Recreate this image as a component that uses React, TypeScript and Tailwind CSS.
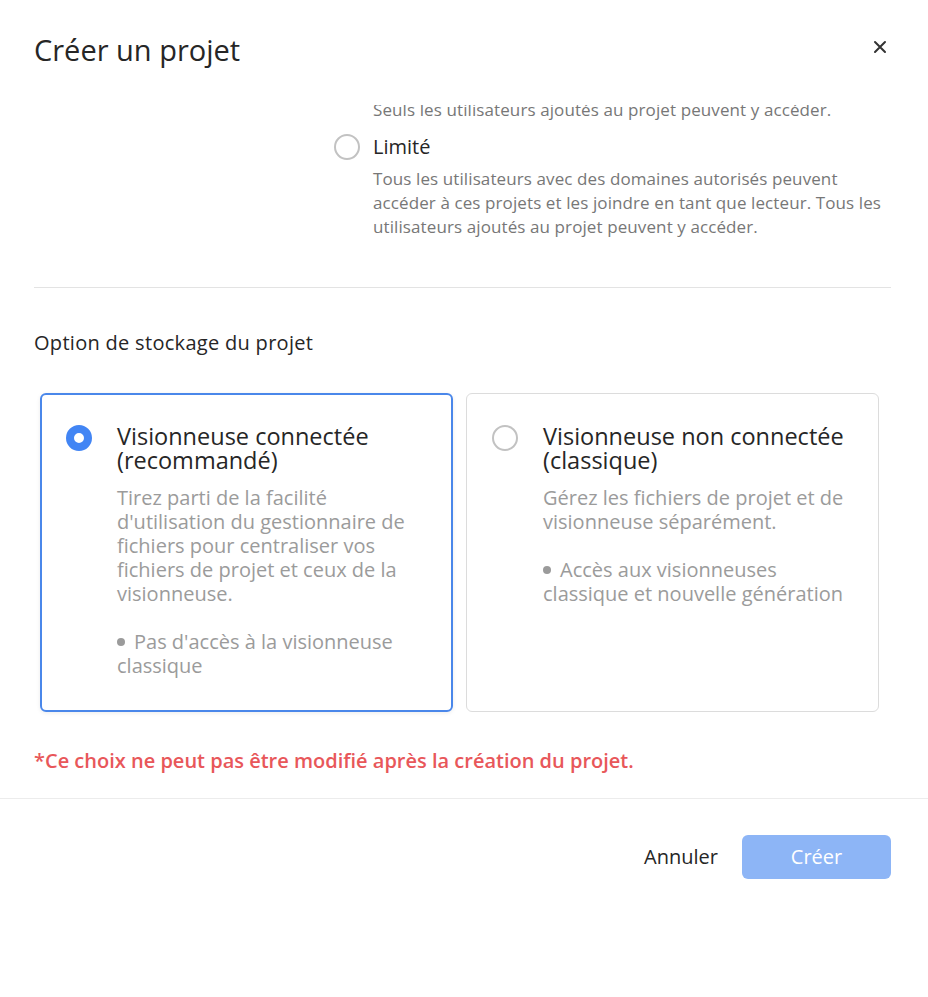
import React, { useState } from 'react';

type Storage = 'connected' | 'classic';

const Radio = ({ checked }: { checked: boolean }) =>
  checked ? (
    <span className="block w-[26px] h-[26px] shrink-0 rounded-full border-[8px] border-[#4285f4] bg-white" />
  ) : (
    <span className="block w-[26px] h-[26px] shrink-0 rounded-full border-[2.5px] border-[#c2c2c2] bg-white" />
  );

interface OptionCardProps {
  title: string[];
  description: string;
  bullet: string;
  selected: boolean;
  onSelect: () => void;
}

const OptionCard: React.FC<OptionCardProps> = ({ title, description, bullet, selected, onSelect }) => (
  <button
    onClick={onSelect}
    className={`text-left rounded-[6px] flex items-start gap-[25px] ${
      selected
        ? 'border-2 border-[#4a87ea] pt-[29px] pl-[24px] pr-[24px] shadow-[0_1px_4px_rgba(0,0,0,0.08)]'
        : 'border border-[#dcdcdc] pt-[30px] pl-[25px] pr-[25px]'
    }`}
  >
    <span className="mt-px">
      <Radio checked={selected} />
    </span>
    <span className="flex flex-col">
      <span className="text-[23.5px] leading-6 font-medium text-[#262626]">
        {title.map((t) => (
          <span key={t} className="block">{t}</span>
        ))}
      </span>
      <span className="mt-[14px] text-[20px] leading-6 text-[#9b9b9b]">{description}</span>
      <span className="mt-6 text-[20px] leading-6 text-[#9b9b9b]">
        <span className="inline-block w-[8px] h-[8px] rounded-full bg-[#9b9b9b] align-[3px] mr-[9px]" />
        {bullet}
      </span>
    </span>
  </button>
);

export default function App() {
  const [storage, setStorage] = useState<Storage>('connected');

  return (
    <div className="w-[928px] h-[997px] bg-white flex flex-col font-['Open_Sans',sans-serif] text-[#262626] overflow-hidden">
      {/* Header */}
      <div className="h-[105px] shrink-0 flex items-start justify-between pl-[34px] pr-[40px] pt-[31px] bg-white relative z-10">
        <h1 className="text-[29px] leading-[38px] font-medium text-[#262626]">Créer un projet</h1>
        <button className="mt-[8px] w-[16px] h-[16px] flex items-center justify-center" title="Fermer">
          <svg width="14" height="14" viewBox="0 0 14 14" fill="none" stroke="#333" strokeWidth="2" strokeLinecap="round">
            <path d="M2 2 L12 12 M12 2 L2 12" />
          </svg>
        </button>
      </div>

      {/* Body (scrolled) */}
      <div className="pl-[34px] pr-[37px] overflow-hidden">
        <p className="mt-[-7px] pl-[339px] text-[17px] tracking-[0.1px] leading-6 text-[#777]">
          Seuls les utilisateurs ajoutés au projet peuvent y accéder.
        </p>
        <label className="mt-[12px] pl-[300px] flex items-center gap-[13px] h-[26px]">
          <Radio checked={false} />
          <span className="text-[20px] leading-[26px] text-[#262626]">Limité</span>
        </label>
        <p className="mt-[7px] pl-[339px] text-[17px] tracking-[0.1px] leading-6 text-[#777]">
          Tous les utilisateurs avec des domaines autorisés peuvent accéder à ces projets et les joindre en tant que
          lecteur. Tous les utilisateurs ajoutés au projet peuvent y accéder.
        </p>

        <div className="mt-[48px] h-px bg-[#e3e3e3]" />

        <h2 className="mt-[43px] text-[20px] tracking-[0.3px] leading-6 font-medium text-[#262626]">
          Option de stockage du projet
        </h2>

        <div className="mt-[38px] pl-[6px] pr-[12px] grid grid-cols-2 gap-[13px] h-[319px]">
          <OptionCard
            title={['Visionneuse connectée', '(recommandé)']}
            description="Tirez parti de la facilité d'utilisation du gestionnaire de fichiers pour centraliser vos fichiers de projet et ceux de la visionneuse."
            bullet="Pas d'accès à la visionneuse classique"
            selected={storage === 'connected'}
            onSelect={() => setStorage('connected')}
          />
          <OptionCard
            title={['Visionneuse non connectée', '(classique)']}
            description="Gérez les fichiers de projet et de visionneuse séparément."
            bullet="Accès aux visionneuses classique et nouvelle génération"
            selected={storage === 'classic'}
            onSelect={() => setStorage('classic')}
          />
        </div>

        <p className="mt-[37px] text-[20px] leading-6 font-semibold text-[#e8575a]">
          *Ce choix ne peut pas être modifié après la création du projet.
        </p>
      </div>

      <div className="mt-[25px] h-px bg-[#ececec] shrink-0" />

      {/* Footer */}
      <div className="mt-[36px] pr-[37px] flex items-center justify-end gap-[24px]">
        <button className="text-[20px] leading-6 text-[#262626]">Annuler</button>
        <button className="w-[149px] h-[44px] rounded-[6px] bg-[#8db5f6] text-white text-[20px] leading-6">Créer</button>
      </div>
    </div>
  );
}
